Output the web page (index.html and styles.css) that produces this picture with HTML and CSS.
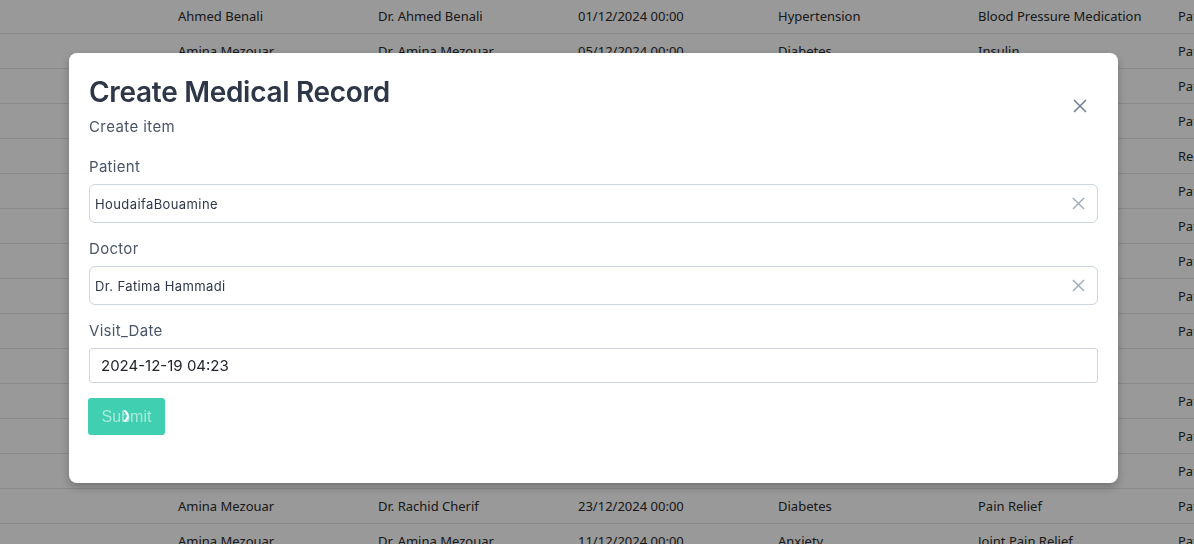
FILE: index.html
```html
<!DOCTYPE html>
<html lang="en">
<head>
    <meta charset="UTF-8">
    <meta name="viewport" content="width=device-width, initial-scale=1.0">
    <title>Medical Records</title>
    <link rel="stylesheet" href="styles.css">
</head>
<body>
    <div class="records">
        <div class="row"><span></span><span>Ahmed Benali</span><span>Dr. Ahmed Benali</span><span>01/12/2024 00:00</span><span>Hypertension</span><span>Blood Pressure Medication</span><span>Patient stable</span></div>
        <div class="row"><span></span><span>Amina Mezouar</span><span>Dr. Amina Mezouar</span><span>05/12/2024 00:00</span><span>Diabetes</span><span>Insulin</span><span>Patient stable</span></div>
        <div class="row"><span></span><span></span><span></span><span></span><span></span><span></span><span>Patient stable</span></div>
        <div class="row"><span></span><span></span><span></span><span></span><span></span><span></span><span>Patient stable</span></div>
        <div class="row"><span></span><span></span><span></span><span></span><span></span><span></span><span>Rest advised</span></div>
        <div class="row"><span></span><span></span><span></span><span></span><span></span><span></span><span>Patient stable</span></div>
        <div class="row"><span></span><span></span><span></span><span></span><span></span><span></span><span>Patient stable</span></div>
        <div class="row"><span></span><span></span><span></span><span></span><span></span><span></span><span>Patient stable</span></div>
        <div class="row"><span></span><span></span><span></span><span></span><span></span><span></span><span>Patient stable</span></div>
        <div class="row"><span></span><span></span><span></span><span></span><span></span><span></span><span>Patient stable</span></div>
        <div class="row"><span></span><span></span><span></span><span></span><span></span><span></span><span></span></div>
        <div class="row"><span></span><span></span><span></span><span></span><span></span><span></span><span>Patient stable</span></div>
        <div class="row"><span></span><span></span><span></span><span></span><span></span><span></span><span>Patient stable</span></div>
        <div class="row"><span></span><span></span><span></span><span></span><span></span><span></span><span>Patient stable</span></div>
        <div class="row"><span></span><span>Amina Mezouar</span><span>Dr. Rachid Cherif</span><span>23/12/2024 00:00</span><span>Diabetes</span><span>Pain Relief</span><span>Patient stable</span></div>
        <div class="row"><span></span><span>Amina Mezouar</span><span>Dr. Amina Mezouar</span><span>11/12/2024 00:00</span><span>Anxiety</span><span>Joint Pain Relief</span><span>Patient stable</span></div>
    </div>

    <div class="overlay">
        <div class="modal">
            <div class="modal-header">
                <div>
                    <h1>Create Medical Record</h1>
                    <p class="subtitle">Create item</p>
                </div>
                <button class="close-btn" type="button">
                    <svg width="14" height="14" viewBox="0 0 14 14"><path d="M1 1 L13 13 M13 1 L1 13" stroke="#718096" stroke-width="1.6" fill="none"/></svg>
                </button>
            </div>

            <div class="field">
                <label>Patient</label>
                <div class="select-box">
                    <span>HoudaifaBouamine</span>
                    <svg width="13" height="13" viewBox="0 0 14 14"><path d="M1 1 L13 13 M13 1 L1 13" stroke="#a0aec0" stroke-width="1.6" fill="none"/></svg>
                </div>
            </div>
            <div class="field">
                <label>Doctor</label>
                <div class="select-box">
                    <span>Dr. Fatima Hammadi</span>
                    <svg width="13" height="13" viewBox="0 0 14 14"><path d="M1 1 L13 13 M13 1 L1 13" stroke="#a0aec0" stroke-width="1.6" fill="none"/></svg>
                </div>
            </div>
            <div class="field">
                <label>Visit_Date</label>
                <div class="date-box">2024-12-19 04:23</div>
            </div>

            <button class="submit-btn" type="button">
                Submit
                <svg class="spinner" width="14" height="14" viewBox="0 0 14 14"><path d="M5 2 A6 6 0 0 1 5 12" stroke="#fff" stroke-width="2" fill="none" stroke-linecap="round"/></svg>
            </button>
        </div>
    </div>
</body>
</html>
```

FILE: styles.css
```css
body {
    margin: 0;
    background-color: #fff;
    font-family: 'Noto Sans', sans-serif;
    overflow: hidden;
}
.records {
    margin-top: -1px;
    width: 1400px;
}
.row {
    display: grid;
    grid-template-columns: 178px 200px 200px 200px 200px 200px 222px;
    height: 34px;
    border-bottom: 1px solid #e6e6e6;
    align-items: center;
    font-size: 13px;
    color: #2a2a2a;
}
.row span {
    white-space: nowrap;
    overflow: hidden;
}
.overlay {
    position: fixed;
    inset: 0;
    background-color: rgba(0, 0, 0, 0.4);
    padding: 53px 0 0 69px;
}
.modal {
    width: 1009px;
    height: 362px;
    background-color: #fff;
    border-radius: 8px;
    box-shadow: 0 4px 10px rgba(0, 0, 0, 0.25);
    padding: 21px 20px 47px 20px;
    font-family: 'Inter', sans-serif;
}
.modal-header {
    display: flex;
    justify-content: space-between;
    align-items: center;
}
.modal-header h1 {
    margin: 0;
    font-size: 28px;
    line-height: 36px;
    font-weight: 600;
    color: #2d3748;
    letter-spacing: -0.3px;
}
.subtitle {
    margin: 6px 0 0 0;
    font-size: 15px;
    line-height: 22px;
    color: #4a5568;
    letter-spacing: 0.4px;
}
.close-btn {
    background: none;
    border: none;
    width: 32px;
    height: 32px;
    margin-right: 2px;
    display: flex;
    align-items: center;
    justify-content: center;
    cursor: pointer;
}
.field {
    margin-top: 18px;
}
.field + .field {
    margin-top: 15px;
}
.field label {
    display: block;
    font-size: 15px;
    line-height: 22px;
    color: #4a5568;
    margin-bottom: 6px;
    letter-spacing: 0.3px;
}
.select-box {
    height: 37px;
    border: 1px solid #cbd5e0;
    border-radius: 6px;
    display: flex;
    align-items: center;
    justify-content: space-between;
    padding: 0 12px 0 5px;
    font-size: 13px;
    color: #2d3748;
    letter-spacing: 0.4px;
}
.date-box {
    height: 33px;
    border: 1px solid #cfd4da;
    border-radius: 3px;
    display: flex;
    align-items: center;
    padding: 0 11px;
    font-size: 15px;
    color: #212529;
}
.submit-btn {
    position: relative;
    margin-top: 15px;
    height: 37px;
    width: 77px;
    border: none;
    border-radius: 3px;
    background-color: #40cfb1;
    color: rgba(255, 255, 255, 0.55);
    font-family: 'Liberation Sans', sans-serif;
    font-size: 16px;
    margin-left: -1px;
}
.spinner {
    position: absolute;
    left: 32px;
    top: 11px;
}
```
